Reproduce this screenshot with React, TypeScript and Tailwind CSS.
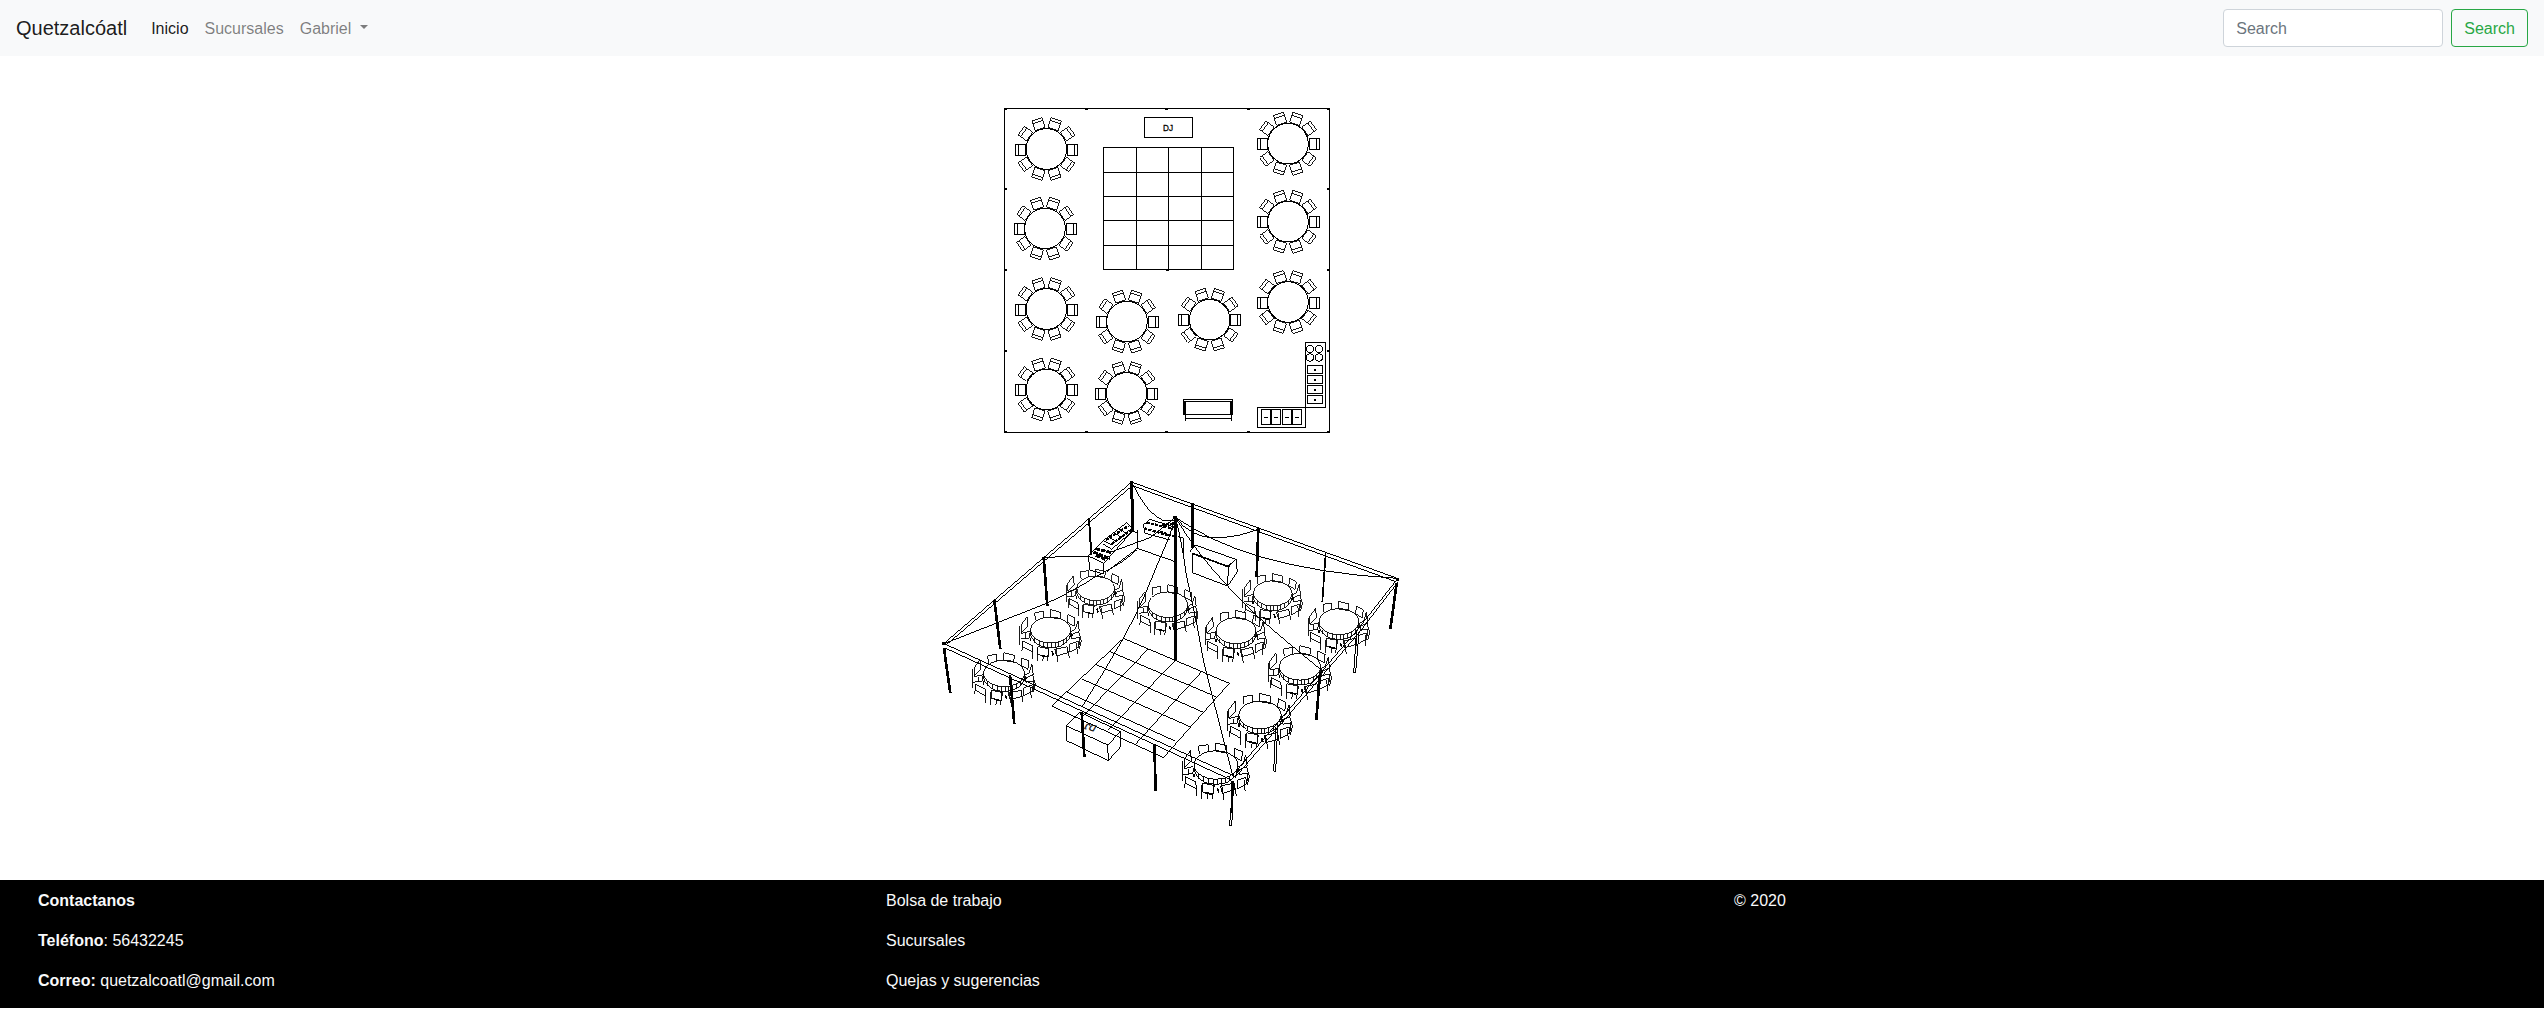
import React from "react";

const planTables: [number, number][] = [
  [1046.5, 149], [1045, 228.5], [1046.5, 309], [1046.5, 389.5], [1127, 321.5],
  [1126.7, 393], [1209.7, 319.7], [1288, 143.7], [1288, 221.7], [1288, 302],
];
const angles = [36, 72, 108, 144, 216, 252, 288, 324];

function PlanTable({ x, y }: { x: number; y: number }) {
  return (
    <g transform={`translate(${x} ${y})`}>
      <circle r="20.3" strokeWidth="1" />
      <path d="M21 -5H31V6H21ZM28 -5V6M-21 -5H-31V6H-21ZM-28 -5V6" />
      {angles.map((a) => (
        <g key={a} transform={`rotate(${a})`} strokeWidth="0.9">
          <path d="M21 -5.2H31.2V5.4H21ZM28.2 -5.2V5.4" />
        </g>
      ))}
    </g>
  );
}

function FloorPlan() {
  return (
    <g strokeWidth="1" shapeRendering="crispEdges">
      <path d="M1004.5 108.5H1329.5V432.5H1004.5Z" />
      <path
        strokeWidth="2"
        d="M1004 109H1007M1085 109H1088M1165 109H1168M1247 109H1250M1327 109H1330M1004 432H1007M1085 432H1088M1165 432H1168M1247 432H1250M1327 432H1330M1005 189H1007M1005 270H1007M1005 351H1007M1327 189H1329M1327 270H1329M1327 351H1329M1166 270H1169"
      />
      <path d="M1144.5 117.5H1192.5V137.5H1144.5Z" />
      <path d="M1103.5 147.5H1233.5V269.5H1103.5ZM1136.5 147.5V269.5M1168.5 147.5V269.5M1201.5 147.5V269.5M1103.5 172.5H1233.5M1103.5 196.5H1233.5M1103.5 220.5H1233.5M1103.5 245.5H1233.5" />
      <text x="1163" y="131" fontSize="9.5" fill="#000" stroke="#000" strokeWidth="0.3" textLength="10" lengthAdjust="spacingAndGlyphs" fontFamily="Liberation Sans, sans-serif">DJ</text>
      {planTables.map(([x, y]) => (
        <PlanTable key={`${x}-${y}`} x={x} y={y} />
      ))}
      <path d="M1183.5 399.5H1232.5V401.5H1183.5ZM1185 414.5H1231M1185 418.5H1231M1185.5 402V420.5M1231.5 402V420.5" />
      <path strokeWidth="3" d="M1184.5 401V415M1231.5 401V415" />
      <path d="M1257.5 407.5H1305.5V427.5H1257.5ZM1305.5 342.5H1325.5V407.5H1305.5Z" />
      {[1261.5, 1271.5, 1282.5, 1292.5].map((x) => (
        <g key={x}>
          <rect x={x} y="409.5" width="9" height="15" rx="1.5" strokeWidth="1.1" />
          <path d={`M${x + 2.5} 417.5H${x + 6.5}`} />
        </g>
      ))}
      {[366, 376, 386, 396].map((y) => (
        <g key={y}>
          <rect x="1307.5" y={y - 0.5} width="15" height="8" />
          <path strokeWidth="2" d={`M1314 ${y + 4}H1316`} />
        </g>
      ))}
      <circle cx="1310" cy="349" r="3.6" />
      <circle cx="1319" cy="349" r="3.6" />
      <circle cx="1310" cy="357.5" r="3.6" />
      <circle cx="1319" cy="357.5" r="3.6" />
    </g>
  );
}

const tentTables: [number, number, number][] = [
  [497, 355, 0.95], [362, 480, 1], [714, 404, 0.98], [1028, 370, 0.97], [918, 482, 1],
  [1227, 455, 1], [1110, 590, 1.03], [990, 735, 1.06], [858, 885, 1.09], [222, 610, 1.02],
];

function TentTable({ x, y, s }: { x: number; y: number; s: number }) {
  return (
    <g transform={`translate(${x} ${y}) scale(${s})`} strokeWidth="2.7">
      <ellipse rx="60" ry="39" />
      <path d="M-60 0V14Q-54 36 -30 48Q0 58 30 48Q56 36 60 14V0" />
      <path d="M-48 24V38M-34 32V46M-20 37V52M-8 39V54M4 39V54M14 39V54M25 36V50M38 30V45M49 22V36" />
      <path d="M-1 -61L30 -53L29 -33L-1 -38ZM52 -46L73 -36L70 -12L50 -23ZM-48 -52L-22 -56V-37M-48 -52L-46 -30M-88 -16L-70 -40L-68 -12L-88 8Z" />
      <path d="M-92 -12V44M-88 10L-62 4M-62 8L-64 24L-90 26M-76 10V26M82 -28L74 -2L60 6M82 -28L86 4L62 14M84 4L92 32L86 56M62 8L64 26L88 22M86 22V44" />
      <path d="M-84 32L-86 62M-84 32L-56 46L-54 66L-84 50ZM-54 54V86M-38 50L-5 56L-7 80L-38 74ZM-40 54V94M-6 56L-10 94M12 58L50 50L52 68L18 78ZM16 58L22 96M50 52L56 84M58 42L82 34L84 52L58 66ZM78 40L80 72M-22 78L-24 94" />
      <path strokeWidth="5" d="M56 20L66 14M-60 24V34M4 64L8 76M-30 76L-12 80" />
    </g>
  );
}

const poles: [string, number][] = [
  ["M605 36L608 183", 9], ["M477 145L484 255", 6], ["M341 262L352 408", 8], ["M193 390L211 537", 8],
  ["M42 535L61 670", 8], ["M240 615L253 763", 8], ["M455 725L463 860", 8], ["M673 822L677 962", 8],
  ["M908 932L905 1030", 8], ["M1170 610L1159 750", 8], ["M1400 340L1381 478", 8],
  ["M1187 250L1177 395", 5], ["M985 175L980 320", 8], ["M787 100L787 235", 9], ["M736 142L736 572", 9],
];

function TentView() {
  return (
    <g transform="translate(930 470) scale(0.33333)" strokeWidth="3" shapeRendering="crispEdges">
      {/* Roof frame */}
      <path d="M40 522L605 36L1402 325M52 522L607 47L1398 335M40 520L910 917M45 534L904 930M908 915L1282 480L1402 327M914 924L1288 487L1405 335" />
      {/* Canopy ridges and valances */}
      <path d="M610 45Q650 130 700 152H736M736 142Q780 200 850 204Q930 202 985 177M736 142Q850 220 990 260Q1170 312 1402 325M736 142Q755 210 768 310L800 460L820 570L850 690L908 917M736 142Q800 250 890 345Q960 425 1085 527L1180 605M736 142Q720 200 690 265L640 385Q615 440 580 505Q520 610 455 712M40 522L350 400Q440 358 500 318Q580 280 622 238M341 262L475 258M540 247L660 203L736 142M530 305L622 235" />
      {/* Dance floor */}
      <path d="M580 505L898 640M540 545L858 680M497 583L820 727M455 627L780 770M412 667L735 813M365 708L700 863M580 505L365 708M655 537L452 745M735 572L535 780M815 605L617 822M898 640L700 863" />
      {/* Kitchen counters */}
      <path d="M475 258L480 300L520 312L522 280L475 258L520 212L590 158L610 180L522 280M622 180V235L736 275M608 183L622 190M640 165L660 148L736 172M640 165L645 190L720 210M745 200L762 205V250" />
      <path d="M520 212L545 225L605 175M520 222L545 238L608 183M535 200L560 215M550 188L575 202M565 176L590 190" />
      <path strokeWidth="9" strokeDasharray="14 3" d="M490 246L540 266M496 236L545 248M498 256L530 270" />
      <path strokeWidth="7" strokeDasharray="9 4" d="M528 210L595 168M545 222L604 180M643 175L720 198M650 158L730 176M690 185L736 200M695 165L736 160" />
      {/* Bar */}
      <path d="M780 245L795 225L918 268L895 290L787 250V308L893 348L895 290M918 268L922 305L893 348" />
      <path strokeWidth="5" d="M787 250L895 290L905 278" />
      {tentTables.map(([x, y, s]) => (
        <TentTable key={`${x}-${y}`} x={x} y={y} s={s} />
      ))}
      {/* DJ booth */}
      <path d="M408 767L450 727L572 785L533 825ZM408 767L410 812L535 872L533 825M572 785V830L535 872" />
      <g transform="translate(502 768) rotate(195) skewX(-15)">
        <text fontSize="27" fill="#000" stroke="#000" strokeWidth="1" fontFamily="Liberation Sans, sans-serif">DJ</text>
      </g>
      {poles.map(([d, w]) => (
        <path key={d} d={d} strokeWidth={w} />
      ))}
      <path d="M903 1025L898 1067H904L909 1025M1037 770L1031 904H1037L1043 770M1280 485L1271 608H1277L1287 485" />
      <path strokeWidth="9" d="M35 522H44M600 38H610M730 144H742M981 178H990M1397 330H1406" />
    </g>
  );
}

function VenueDrawing() {
  return (
    <svg className="block h-[745px] w-[480px]" viewBox="930 95 480 745" fill="none" stroke="#000" role="img" aria-label="Plano del salón">
      <FloorPlan />
      <TentView />
    </svg>
  );
}

export default function App() {
  return (
    <div className="min-h-[1032px] bg-white font-['Liberation_Sans',Arial,sans-serif] text-base text-[#212529]">
      <nav className="flex h-14 items-center bg-[#f8f9fa] px-4">
        <a className="mr-4 text-xl leading-[30px] text-black/90">Quetzalcóatl</a>
        <div className="flex flex-1 pt-px">
          <a className="p-2 text-black/90">Inicio</a>
          <a className="p-2 text-black/50">Sucursales</a>
          <a className="flex items-center p-2 text-black/50">
            Gabriel
            <span className="-mt-1 ml-[9px] border-x-[4.8px] border-t-[4.8px] border-x-transparent border-t-black/50" />
          </a>
        </div>
        <form className="flex gap-2">
          <input
            className="h-[38px] w-[220px] rounded border border-[#ced4da] bg-white px-3 pt-0.5 placeholder:text-[#6c757d]"
            placeholder="Search"
          />
          <button type="button" className="h-[38px] rounded border border-[#28a745] px-3 pt-0.5 text-[#28a745]">
            Search
          </button>
        </form>
      </nav>
      <main className="h-[824px] pt-[39px] pl-[930px]">
        <VenueDrawing />
      </main>
      <footer className="grid h-32 grid-cols-3 bg-black pt-[9px] text-[#f8f9fa]">
        <div className="flex flex-col gap-4 pl-[38px]">
          <p className="font-bold">Contactanos</p>
          <p><b>Teléfono</b>: 56432245</p>
          <p><b>Correo:</b> quetzalcoatl@gmail.com</p>
        </div>
        <div className="flex flex-col gap-4 pl-[38px]">
          <p>Bolsa de trabajo</p>
          <p>Sucursales</p>
          <p>Quejas y sugerencias</p>
        </div>
        <div className="pl-[38px]">
          <p>© 2020</p>
        </div>
      </footer>
    </div>
  );
}
